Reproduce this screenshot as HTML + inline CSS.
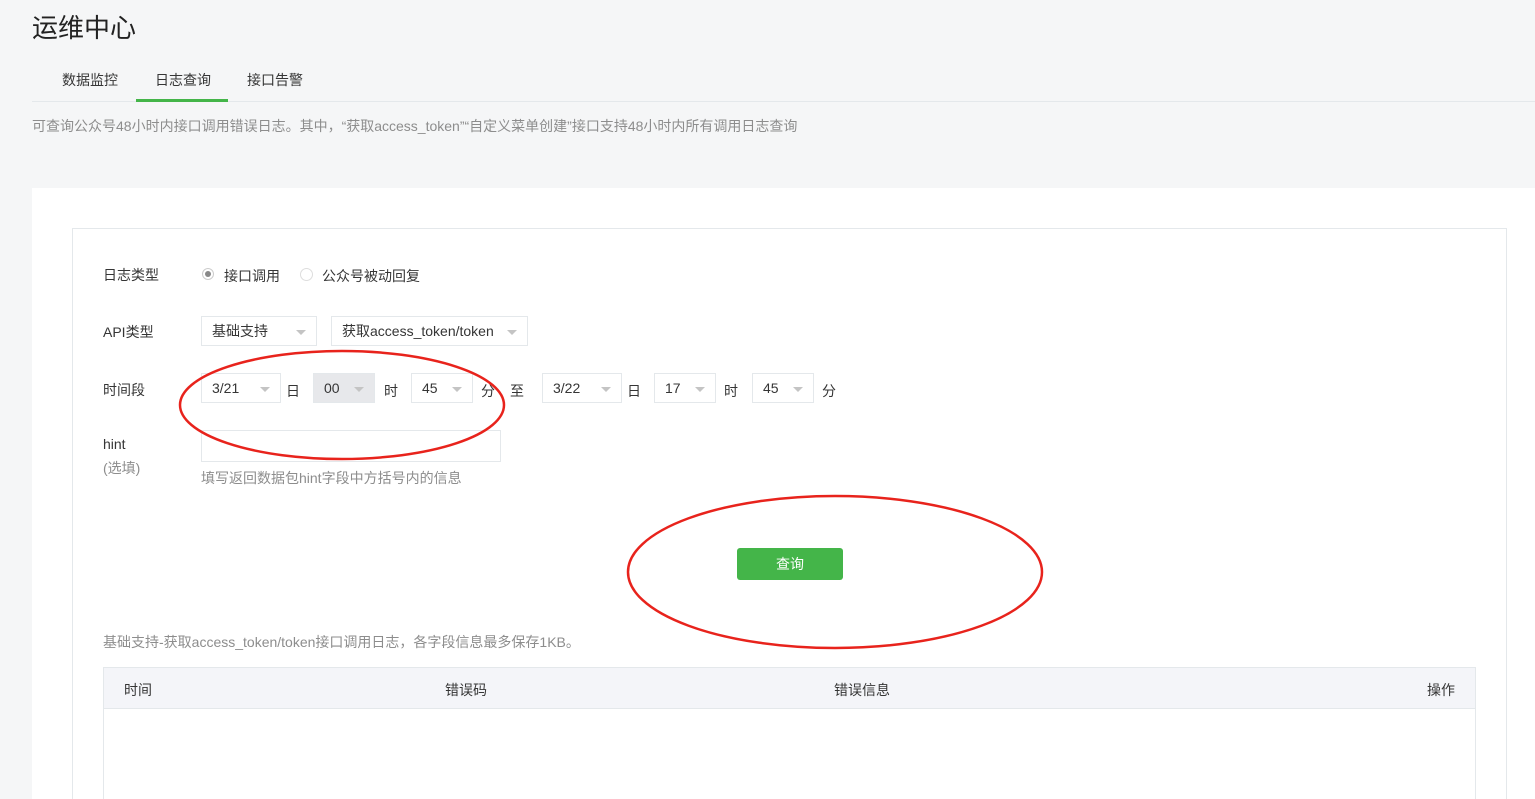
<!DOCTYPE html>
<html><head><meta charset="utf-8"><style>
html,body{margin:0;width:1535px;height:799px;overflow:hidden}
body{background:#f5f6f7;font-family:"Liberation Sans","Noto Sans CJK SC",sans-serif;color:#353535;position:relative}
.a{position:absolute;white-space:nowrap}
.sel{position:absolute;border:1px solid #e4e8eb;background:#fff;height:30px;box-sizing:border-box;font-size:14px;line-height:28px;padding-left:10px;color:#353535}
.sel:after{content:"";position:absolute;right:10px;top:13px;border:5px solid transparent;border-top:5px solid #c4c4c4;border-bottom:0}
.l{font-size:14px;color:#353535}
</style></head><body>
<div class="a" style="left:32px;top:8px;font-size:26px;color:#222">运维中心</div>
<div class="a l" style="left:62px;top:70px">数据监控</div>
<div class="a l" style="left:155px;top:70px">日志查询</div>
<div class="a l" style="left:247px;top:70px">接口告警</div>
<div class="a" style="left:32px;top:101px;width:1503px;height:1px;background:#e4e8eb"></div>
<div class="a" style="left:136px;top:99px;width:92px;height:3px;background:#44b549"></div>
<div class="a" style="left:32px;top:116px;font-size:14px;color:#8d8d8d">可查询公众号48小时内接口调用错误日志。其中，“获取access_token”“自定义菜单创建”接口支持48小时内所有调用日志查询</div>
<div class="a" style="left:32px;top:188px;width:1503px;height:611px;background:#fff"></div>
<div class="a" style="left:72px;top:228px;width:1435px;height:571px;border:1px solid #e4e8eb;border-bottom:0;box-sizing:border-box"></div>
<div class="a l" style="left:103px;top:265px">日志类型</div>
<div class="a" style="left:202px;top:268px;width:12px;height:12px;border:1px solid #ccc;border-radius:50%;box-sizing:border-box;background:#fff"><div style="width:6px;height:6px;border-radius:50%;background:#888;margin:2px"></div></div>
<div class="a l" style="left:224px;top:266px">接口调用</div>
<div class="a" style="left:300px;top:268px;width:13px;height:13px;border:1px solid #ddd;border-radius:50%;box-sizing:border-box"></div>
<div class="a l" style="left:322px;top:266px">公众号被动回复</div>
<div class="a l" style="left:103px;top:322px">API类型</div>
<div class="sel" style="left:201px;top:316px;width:116px">基础支持</div>
<div class="sel" style="left:331px;top:316px;width:197px">获取access_token/token</div>
<div class="a l" style="left:103px;top:380px">时间段</div>
<div class="sel" style="left:201px;top:373px;width:80px">3/21</div>
<div class="a l" style="left:286px;top:381px">日</div>
<div class="sel" style="left:313px;top:373px;width:62px;background:#e7e8eb">00</div>
<div class="a l" style="left:384px;top:381px">时</div>
<div class="sel" style="left:411px;top:373px;width:62px">45</div>
<div class="a l" style="left:481px;top:381px">分</div>
<div class="a l" style="left:510px;top:381px">至</div>
<div class="sel" style="left:542px;top:373px;width:80px">3/22</div>
<div class="a l" style="left:627px;top:381px">日</div>
<div class="sel" style="left:654px;top:373px;width:62px">17</div>
<div class="a l" style="left:724px;top:381px">时</div>
<div class="sel" style="left:752px;top:373px;width:62px">45</div>
<div class="a l" style="left:822px;top:381px">分</div>
<div class="a l" style="left:103px;top:436px">hint</div>
<div class="a" style="left:103px;top:458px;font-size:14px;color:#8d8d8d">(选填)</div>
<div class="a" style="left:201px;top:430px;width:300px;height:32px;border:1px solid #e4e8eb;box-sizing:border-box"></div>
<div class="a" style="left:201px;top:468px;font-size:14px;color:#8d8d8d">填写返回数据包hint字段中方括号内的信息</div>
<div class="a" style="left:737px;top:548px;width:106px;height:32px;background:#44b549;border-radius:3px;color:#fff;font-size:14px;line-height:32px;text-align:center">查询</div>
<div class="a" style="left:103px;top:632px;font-size:14px;color:#8d8d8d">基础支持-获取access_token/token接口调用日志，各字段信息最多保存1KB。</div>
<div class="a" style="left:103px;top:667px;width:1373px;height:132px;border:1px solid #e4e8eb;border-bottom:0;box-sizing:border-box"></div>
<div class="a" style="left:104px;top:668px;width:1371px;height:40px;background:#f4f5f9;border-bottom:1px solid #e4e8eb"></div>
<div class="a l" style="left:124px;top:680px">时间</div>
<div class="a l" style="left:445px;top:680px">错误码</div>
<div class="a l" style="left:834px;top:680px">错误信息</div>
<div class="a l" style="left:1427px;top:680px">操作</div>
<svg class="a" style="left:0;top:0" width="1535" height="799"><ellipse cx="342" cy="405" rx="162" ry="54" fill="none" stroke="#e8231c" stroke-width="2.5"/><ellipse cx="835" cy="572" rx="207" ry="76" fill="none" stroke="#e8231c" stroke-width="2.5"/></svg>
</body></html>
